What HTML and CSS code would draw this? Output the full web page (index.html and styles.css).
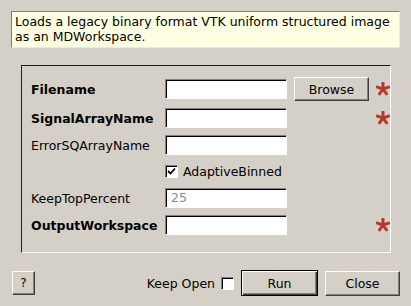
FILE: index.html
```html
<!DOCTYPE html>
<html lang="en">
<head>
    <meta charset="UTF-8">
    <title>LoadVTK</title>
    <link rel="stylesheet" href="styles.css">
</head>
<body>
    <div class="dialog">
        <div class="desc">Loads a legacy binary format VTK uniform structured image as an MDWorkspace.</div>

        <div class="group">
            <div class="form">
                <span class="label bold">Filename</span>
                <span class="field"></span>
                <button class="btn browse">Browse</button>
                <svg class="star" viewBox="0 0 14 14"><path d="M7 7L7 1M7 7L12.7 5.1M7 7L10.5 11.9M7 7L3.5 11.9M7 7L1.3 5.1"/></svg>

                <span class="label bold">SignalArrayName</span>
                <span class="field"></span>
                <span></span>
                <svg class="star" viewBox="0 0 14 14"><path d="M7 7L7 1M7 7L12.7 5.1M7 7L10.5 11.9M7 7L3.5 11.9M7 7L1.3 5.1"/></svg>

                <span class="label">ErrorSQArrayName</span>
                <span class="field"></span>
                <span></span>
                <span></span>

                <span></span>
                <label class="check-row">
                    <span class="check"><svg viewBox="0 0 9 9"><path d="M1 4L3.5 6.5L8 1.5"/></svg></span>
                    AdaptiveBinned
                </label>
                <span></span>
                <span></span>

                <span class="label">KeepTopPercent</span>
                <span class="field placeholder">25</span>
                <span></span>
                <span></span>

                <span class="label bold">OutputWorkspace</span>
                <span class="field"></span>
                <span></span>
                <svg class="star" viewBox="0 0 14 14"><path d="M7 7L7 1M7 7L12.7 5.1M7 7L10.5 11.9M7 7L3.5 11.9M7 7L1.3 5.1"/></svg>
            </div>
        </div>

        <div class="footer">
            <button class="btn help">?</button>
            <span class="spacer"></span>
            <label class="keep">Keep Open <span class="check empty"></span></label>
            <button class="btn run">Run</button>
            <button class="btn close">Close</button>
        </div>
    </div>
</body>
</html>
```

FILE: styles.css
```css
body {
    margin: 0;
    background-color: #d4d0c8;
    font-family: "DejaVu Sans", sans-serif;
    font-size: 12.5px;
    color: #000;
}
.dialog {
    width: 411px;
    height: 306px;
    box-sizing: border-box;
    padding: 11px 11px 0 11px;
}
.desc {
    height: 37px;
    box-sizing: border-box;
    padding: 2px 3px;
    line-height: 15px;
    background-color: #ffffe1;
    border: 1px solid;
    border-color: #808080 #e8e8e8 #e8e8e8 #808080;
}
.group {
    margin: 17px 9px 0 10px;
    height: 188px;
    box-sizing: border-box;
    padding: 11px 0 0 9px;
    border: 1px solid;
    border-color: #1e1e1e #fff #fff #1e1e1e;
}
.form {
    display: grid;
    grid-template-columns: 127px 122px 75px 14px;
    grid-template-rows: 24px 20px 20px 19px 20px 20px;
    column-gap: 7px;
    row-gap: 7px;
    align-items: center;
}
.label.bold {
    font-weight: bold;
}
.field {
    display: block;
    height: 20px;
    box-sizing: border-box;
    padding: 1px 5px;
    line-height: 16px;
    background-color: #fff;
    border: 1px solid;
    border-color: #808080 #fff #fff #808080;
    box-shadow: inset 1px 1px 0 #000;
}
.placeholder {
    color: #8c8c8c;
}
.btn {
    font-family: inherit;
    font-size: 12.5px;
    color: #000;
    background-color: #d4d0c8;
    border: 1px solid;
    border-color: #fff #404040 #404040 #fff;
    box-shadow: inset -1px -1px 0 #808080;
    padding: 0;
}
.browse {
    height: 24px;
}
.star {
    width: 14px;
    height: 14px;
    fill: none;
    stroke: #b3392a;
    stroke-width: 3;
    stroke-linecap: round;
}
.check-row {
    display: flex;
    align-items: center;
    gap: 5px;
}
.check {
    display: inline-flex;
    align-items: center;
    justify-content: center;
    width: 13px;
    height: 13px;
    box-sizing: border-box;
    background-color: #fff;
    border: 1px solid;
    border-color: #808080 #fff #fff #808080;
    box-shadow: inset 1px 1px 0 #000;
}
.check svg {
    width: 9px;
    height: 9px;
    fill: none;
    stroke: #000;
    stroke-width: 1.8;
}
.footer {
    display: flex;
    align-items: center;
    margin-top: 17px;
    padding-left: 1px;
}
.help {
    width: 23px;
    height: 24px;
    font-size: 12px;
}
.spacer {
    flex: 1;
}
.keep {
    display: flex;
    align-items: center;
    gap: 6px;
}
.run {
    margin-left: 7px;
    width: 77px;
    height: 26px;
    border: 1px solid #000;
    box-shadow: inset 1px 1px 0 #fff, inset -1px -1px 0 #404040, inset -2px -2px 0 #808080;
}
.close {
    margin-left: 7px;
    width: 75px;
    height: 25px;
}
```
